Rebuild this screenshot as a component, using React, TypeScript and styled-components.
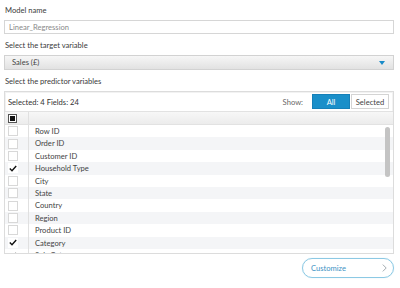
import React from "react";
import styled, { createGlobalStyle } from "styled-components";

const GlobalStyle = createGlobalStyle`
  html, body {
    margin: 0;
    padding: 0;
    background: #ffffff;
  }
  body {
    font-family: Lato, "Noto Sans", sans-serif;
    color: #333;
  }
`;

const fields = [
  { name: "Row ID", checked: false },
  { name: "Order ID", checked: false },
  { name: "Customer ID", checked: false },
  { name: "Household Type", checked: true },
  { name: "City", checked: false },
  { name: "State", checked: false },
  { name: "Country", checked: false },
  { name: "Region", checked: false },
  { name: "Product ID", checked: false },
  { name: "Category", checked: true },
  { name: "Sub-Category", checked: true },
];

const Page = styled.div`
  width: 400px;
  height: 288px;
  padding: 4px 6px 0 4px;
  box-sizing: border-box;
  display: flex;
  flex-direction: column;
  overflow: hidden;
`;

const Label = styled.div`
  font-size: 7.6px;
  line-height: 12px;
  color: #3a3a3a;
  padding-left: 1px;
  margin-bottom: 4px;
`;

const TextInput = styled.div`
  height: 12px;
  border: 1px solid #d6d6d6;
  font-size: 7.6px;
  line-height: 12px;
  color: #8a8a8a;
  padding-left: 4px;
  margin-bottom: 5px;
`;

const Select = styled.div`
  height: 13px;
  border: 1px solid #d2d2d2;
  background: linear-gradient(#f6f6f6, #e2e2e2);
  font-size: 7.6px;
  line-height: 13px;
  color: #444;
  padding: 0 8px 0 7px;
  display: flex;
  justify-content: space-between;
  align-items: center;
  margin-bottom: 5px;
`;

const Caret = styled.span`
  width: 0;
  height: 0;
  border-left: 3.5px solid transparent;
  border-right: 3.5px solid transparent;
  border-top: 4px solid #1a8bc8;
`;

const Panel = styled.div`
  border: 1px solid #dcdcdc;
  box-shadow: inset 0 0 0 1px #f2f2f2;
  height: 163px;
  box-sizing: border-box;
  display: flex;
  flex-direction: column;
  overflow: hidden;
  margin-bottom: 4px;
`;

const PanelHeader = styled.div`
  height: 19px;
  flex-shrink: 0;
  display: flex;
  align-items: center;
  justify-content: space-between;
  padding: 0 4px 0 3px;
  font-size: 7.6px;
  color: #333;
`;

const ShowGroup = styled.div`
  display: flex;
  align-items: center;
`;

const ShowLabel = styled.span`
  color: #666;
  margin-right: 8px;
`;

const Toggle = styled.div<{ $active?: boolean }>`
  width: 38px;
  height: 15px;
  box-sizing: border-box;
  display: flex;
  align-items: center;
  justify-content: center;
  font-size: 7.6px;
  margin-left: 1px;
  border: 1px solid ${(p) => (p.$active ? "#1680b8" : "#d4d4d4")};
  background: ${(p) => (p.$active ? "#1a8fc9" : "#ffffff")};
  color: ${(p) => (p.$active ? "#ffffff" : "#444")};
`;

const TableHead = styled.div`
  height: 12px;
  flex-shrink: 0;
  display: flex;
  background: linear-gradient(#f7f7f7, #ececec);
  border-top: 1px solid #e2e2e2;
  border-bottom: 1px solid #e2e2e2;
`;

const CheckCell = styled.div`
  width: 24px;
  box-sizing: border-box;
  border-right: 1px solid #e0e0e0;
  display: flex;
  align-items: center;
  padding-left: 3px;
  flex-shrink: 0;
`;

const Body = styled.div`
  flex: 1;
  position: relative;
  overflow: hidden;
`;

const Row = styled.div<{ $striped: boolean }>`
  height: 12.4px;
  display: flex;
  background: ${(p) => (p.$striped ? "#f4f5f7" : "#ffffff")};
`;

const Box = styled.div<{ $checked?: boolean }>`
  width: 8px;
  height: 8px;
  border: 1px solid ${(p) => (p.$checked ? "#ffffff" : "#d8d8d8")};
  background: #fff;
  display: flex;
  align-items: center;
  justify-content: center;
`;

const HeadBox = styled.div`
  width: 7px;
  height: 7px;
  border: 1px solid #555;
  background: #fff;
  display: flex;
  align-items: center;
  justify-content: center;
`;

const HeadFill = styled.div`
  width: 5px;
  height: 5px;
  background: #111;
`;

const FieldName = styled.div`
  font-size: 7.6px;
  line-height: 12.4px;
  color: #444;
  padding-left: 6px;
`;

const Scrollbar = styled.div`
  position: absolute;
  right: 3px;
  top: 2px;
  width: 5px;
  height: 50px;
  border-radius: 3px;
  background: #c4c4c4;
`;

const Footer = styled.div`
  display: flex;
  justify-content: flex-end;
`;

const CustomizeButton = styled.div`
  width: 92px;
  height: 20px;
  box-sizing: border-box;
  border: 1px solid #8cc9e4;
  border-radius: 10px;
  display: flex;
  align-items: center;
  justify-content: space-between;
  padding: 0 6px 0 8px;
  font-size: 7.6px;
  color: #3e93c4;
  box-shadow: 0 0 1px #b8e0f0;
`;

const Check = () => (
  <svg width="8" height="7" viewBox="0 0 8 7">
    <path d="M0.8 3.6 L3 5.8 L7.2 1" fill="none" stroke="#111" strokeWidth="1.4" />
  </svg>
);

const Chevron = () => (
  <svg width="5" height="8" viewBox="0 0 5 8">
    <path d="M0.8 0.6 L4.2 4 L0.8 7.4" fill="none" stroke="#9aa3a8" strokeWidth="0.9" />
  </svg>
);

export default function App() {
  return (
    <>
      <GlobalStyle />
      <Page>
        <Label>Model name</Label>
        <TextInput>Linear_Regression</TextInput>
        <Label>Select the target variable</Label>
        <Select>
          <span>Sales (£)</span>
          <Caret />
        </Select>
        <Label>Select the predictor variables</Label>
        <Panel>
          <PanelHeader>
            <span>Selected: 4 Fields: 24</span>
            <ShowGroup>
              <ShowLabel>Show:</ShowLabel>
              <Toggle $active>All</Toggle>
              <Toggle>Selected</Toggle>
            </ShowGroup>
          </PanelHeader>
          <TableHead>
            <CheckCell>
              <HeadBox>
                <HeadFill />
              </HeadBox>
            </CheckCell>
          </TableHead>
          <Body>
            {fields.map((f, i) => (
              <Row key={f.name} $striped={i % 2 === 1}>
                <CheckCell>
                  <Box $checked={f.checked}>{f.checked && <Check />}</Box>
                </CheckCell>
                <FieldName>{f.name}</FieldName>
              </Row>
            ))}
            <Scrollbar />
          </Body>
        </Panel>
        <Footer>
          <CustomizeButton>
            <span>Customize</span>
            <Chevron />
          </CustomizeButton>
        </Footer>
      </Page>
    </>
  );
}
